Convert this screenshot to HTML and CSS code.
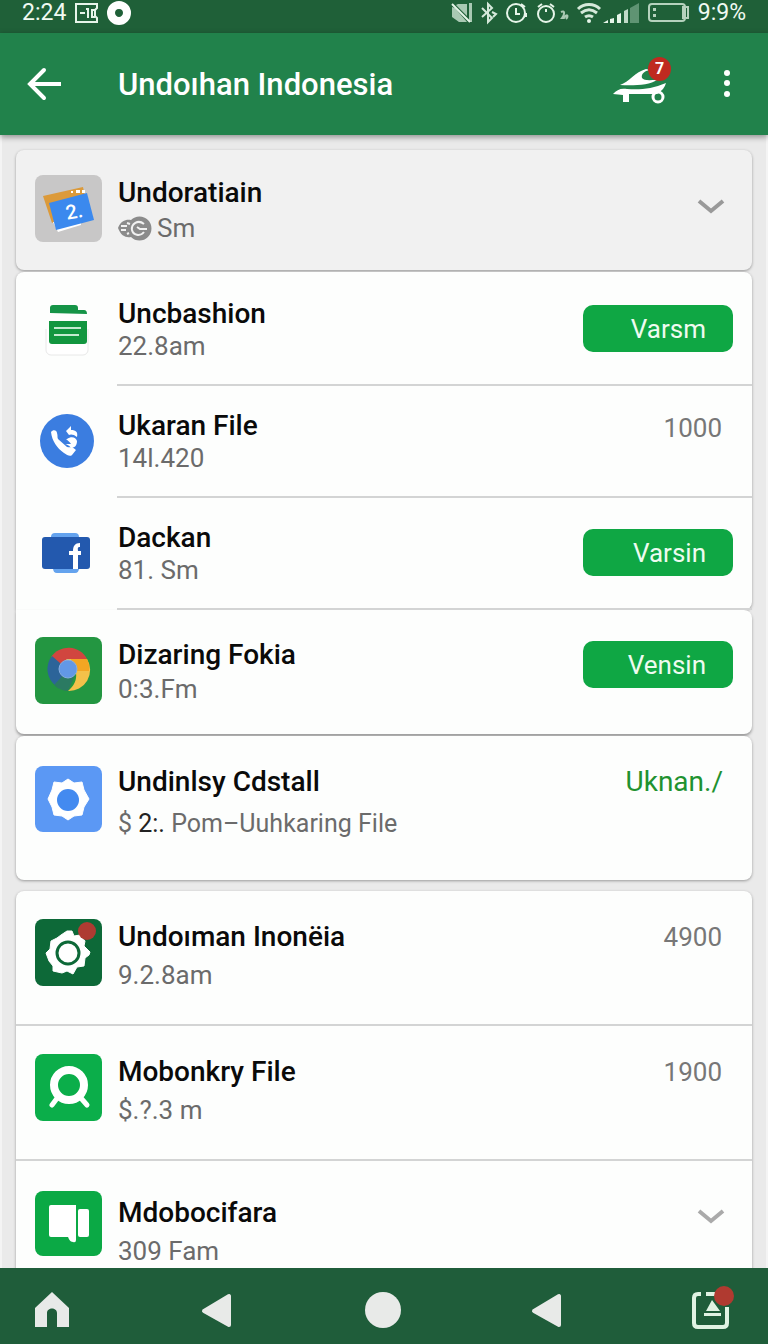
FILE: index.html
```html
<!DOCTYPE html>
<html lang="id">
<head>
    <meta charset="UTF-8">
    <meta name="viewport" content="width=device-width, initial-scale=1.0">
    <title>Undoıhan Indonesia</title>
    <link rel="stylesheet" href="styles.css">
</head>
<body>
    <div class="status-bar">
        <div class="status-group">
            <span class="clock">2:24</span>
            <svg width="23" height="20" viewBox="0 0 23 20" fill="none" stroke="#e6f5e9" stroke-width="2">
                <path d="M22 1H1v18h21v-4l-2-2V7l2-2z"/>
                <path d="M5 10h5M11 6h2v9M20 7h-3v7h3" />
            </svg>
            <svg width="24" height="24" viewBox="0 0 24 24">
                <path d="M12 0a12 12 0 1 0 0 24 12 12 0 0 0 0-24zm0 8c3 0 4 2 4 4s-2 4-4 4-4-2-4-4 1-4 4-4z" fill="#fff" fill-rule="evenodd"/>
            </svg>
        </div>
        <div class="status-group">
            <svg width="21" height="20" viewBox="0 0 21 20">
                <path d="M1 4l3 1 12 14H8l-7-5zM7 1h9v12L5 2zM18 0h3v19h-3z" fill="#a9c9b3"/>
                <path d="M1 1l18 18" stroke="#e6f5e9" stroke-width="2"/>
            </svg>
            <svg width="16" height="22" viewBox="0 0 16 22" fill="none" stroke="#d5e9da" stroke-width="2">
                <path d="M1 6l10 10-4 4V2l4 4L1 15M11 10l4 2-3 3"/>
            </svg>
            <svg width="22" height="20" viewBox="0 0 22 20" fill="none" stroke="#e6f5e9" stroke-width="2">
                <circle cx="10" cy="10" r="9"/>
                <path d="M10 5v6h4M15 1l4 3M20 10v4"/>
            </svg>
            <svg width="31" height="20" viewBox="0 0 31 20" fill="none" stroke="#e6f5e9" stroke-width="2">
                <circle cx="9" cy="11" r="8"/>
                <path d="M1 4l4-3M13 1l4 3M9 6v3"/>
                <path d="M24 9c4-2 4 2 1 6h2c3-5 5-2 2 1" stroke="#a9c9b3"/>
            </svg>
            <svg width="62" height="21" viewBox="0 0 62 21">
                <g fill="none" stroke="#d5e9da" stroke-width="3">
                    <path d="M1 6c6-6 16-6 22 0M4 10c5-4 11-4 16 0M8 14c3-2 5-2 8 0"/>
                </g>
                <circle cx="12" cy="18" r="2" fill="#e6f5e9"/>
                <path d="M26 20l5-3v3zM33 16l4-1v5h-4zM40 12l4-2v10h-4z" fill="#e6f5e9"/>
                <path d="M47 8l4-2v14h-4z" fill="#c0d9c7"/>
                <path d="M53 5l9-5v20h-9z" fill="#5f9473"/>
            </svg>
            <svg width="41" height="20" viewBox="0 0 41 20" fill="none" stroke="#b5d2bd" stroke-width="2">
                <rect x="1" y="1" width="36" height="17" rx="3"/>
                <path d="M35 3v13M38 4h2v11h-2"/>
                <path d="M5 5h3v3H5zM5 11h3v3H5z" fill="#b5d2bd" stroke="none"/>
            </svg>
            <span class="battery">9:9%</span>
        </div>
    </div>

    <header class="app-bar">
        <button class="icon-button" aria-label="Back">
            <svg width="36" height="34" viewBox="0 0 36 34" fill="none" stroke="#fff" stroke-width="4">
                <path d="M34 17H3"/>
                <path d="M17 3L3 17l14 14" stroke-linecap="round"/>
            </svg>
        </button>
        <h1>Undoıhan Indonesia</h1>
        <button class="icon-button car" aria-label="Notifications">
            <svg width="54" height="36" viewBox="0 0 54 36" fill="#fff">
                <path d="M7 17c9-3 15-13 26-16l4 1c-6 1-9 4-8 8 2 3 8 2 15 2-7 5-24 6-37 5z"/>
                <path d="M0 26c4-4 7-6 14-5 13 1 25 0 39-6-1 4-4 8-9 11H16v8h-6v-7z"/>
                <circle cx="45" cy="29" r="5" fill="none" stroke="#fff" stroke-width="3"/>
            </svg>
            <span class="badge">7</span>
        </button>
        <button class="icon-button" aria-label="More">
            <svg width="8" height="28" viewBox="0 0 8 28" fill="#fff">
                <circle cx="4" cy="3" r="3"/><circle cx="4" cy="13" r="3"/><circle cx="4" cy="24" r="3"/>
            </svg>
        </button>
    </header>

    <main class="content">
        <section class="card card-header">
            <div class="row row-header">
                <svg class="app-icon" viewBox="0 0 67 67">
                    <rect width="67" height="67" rx="8" fill="#c8c7c7"/>
                    <path d="M8 21l40-9 4 19-35 17z" fill="#dc9a3a"/>
                    <path d="M18 47l5 10 23-7v-6z" fill="#fff"/>
                    <path d="M14 28l38-10 7 27-38 10z" fill="#3b89ee"/>
                    <path d="M36 16h2v2h-2zM41 15h4v3h-4zM47 15h3v3h-3z" fill="#fff"/>
                    <text class="icon-digit" x="31" y="44" transform="rotate(-10 36 38)">2.</text>
                </svg>
                <div class="text">
                    <h2>Undoratiain</h2>
                    <p class="with-icon">
                        <svg width="33" height="25" viewBox="0 0 33 25">
                            <path d="M0 12C3 4 9 3 13 4a12 12 0 1 1 0 17C8 22 3 20 0 12z" fill="#8b8b8b"/>
                            <path d="M26 8c-6-5-13 0-12 6 1 5 8 7 12 2M19 11l3 2h7M3 10h6M3 14h5M9 7l3 1M9 18l2-1" fill="none" stroke="#f1f1f1" stroke-width="2"/>
                        </svg>
                        Sm
                    </p>
                </div>
                <button class="icon-button chevron" aria-label="Expand">
                    <svg width="28" height="16" viewBox="0 0 28 16" fill="none" stroke="#999" stroke-width="4">
                        <path d="M2 2l12 10L26 2"/>
                    </svg>
                </button>
            </div>
        </section>

        <section class="card card-list">
            <div class="row row-compact row-first">
                <svg class="app-icon" viewBox="0 0 67 67">
                    <rect x="11" y="8" width="42" height="51" rx="5" fill="#fff" stroke="#e8e8e8"/>
                    <path d="M10 7h44v26H10z" fill="#fdfefd"/>
                    <path d="M15 17v-5q0-3 3-3h22q3 0 3 3v2h6q3 0 3 4z" fill="#159447"/>
                    <path d="M14 25h38v20q0 3-3 3H17q-3 0-3-3z" fill="#12963f"/>
                    <path d="M19 32h27M19 39h25" stroke="#c5ead0" stroke-width="2"/>
                </svg>
                <div class="text">
                    <h2>Uncbashion</h2>
                    <p>22.8am</p>
                </div>
                <button class="action">Varsm</button>
            </div>
            <div class="row row-compact">
                <svg class="app-icon" viewBox="0 0 67 67">
                    <circle cx="32" cy="33" r="27" fill="#3b7de0"/>
                    <path d="M16 24c2-3 6-2 6 1 1 3 0 4 1 6l9 8c3 1 5-1 9 3l-4 5c-2 2-5 0-8-2-7-5-12-12-13-21z" fill="#fff"/>
                    <path d="M31 23l5-5v4c5 0 7 2 6 7-3-3-7-3-8-2zM32 31c4-3 9-2 10 2 0 5-3 7-6 7-2-3-5-4-6-4h6c-1-2-3-3-5-5z" fill="#fff"/>
                </svg>
                <div class="text">
                    <h2>Ukaran File</h2>
                    <p>14l.420</p>
                </div>
                <span class="count">1000</span>
            </div>
            <div class="row row-compact">
                <svg class="app-icon" viewBox="0 0 67 67">
                    <path d="M16 17q0-4 4-4h20q4 0 4 4v31q0 5-4 5H22q-4 0-4-5z" fill="#64a3ee"/>
                    <rect x="7" y="17" width="48" height="32" rx="3" fill="#2359ae"/>
                    <path d="M38 49V35h-4v-4h4c0-5 2-8 7-8v4c-3 0-2 2-2 4h3v4h-3v14z" fill="#fff"/>
                </svg>
                <div class="text">
                    <h2>Dackan</h2>
                    <p>81. Sm</p>
                </div>
                <button class="action">Varsin</button>
            </div>
        </section>

        <section class="card card-joined">
            <div class="row row-medium">
                <svg class="app-icon" viewBox="0 0 67 67">
                    <rect width="67" height="67" rx="8" fill="#239641"/>
                    <path d="M33 33L52 22A21 21 0 0 0 16 20z" fill="#d1463f"/>
                    <path d="M33 33L17 19A21 21 0 0 0 21 49z" fill="#2c6499"/>
                    <path d="M33 33L19 48a21 21 0 0 0 14 6l7-16z" fill="#2b7a62"/>
                    <path d="M31 22h21a21 21 0 0 1-19 32c6-5 9-11 8-18z" fill="#f3c14a"/>
                    <path d="M36 22h16q3 6 2 12H40z" fill="#f3a623"/>
                    <circle cx="33" cy="32" r="9" fill="#6298e6" stroke="#87aee0"/>
                </svg>
                <div class="text">
                    <h2>Dizaring Fokia</h2>
                    <p>0:3.Fm</p>
                </div>
                <button class="action">Vensin</button>
            </div>
        </section>

        <section class="card card-spaced">
            <div class="row row-detail">
                <svg class="app-icon" viewBox="0 0 67 67">
                    <rect width="67" height="66" rx="8" fill="#5b98f4"/>
                    <path d="M33 13l6 4 8-1 2 8 5 9-5 8-2 8-8 1-6 4-6-4-8-1-2-8-4-8 4-9 2-8 8 1z" fill="#fff" stroke="#fff" stroke-linejoin="round"/>
                    <circle cx="33" cy="34" r="11" fill="#438af0"/>
                </svg>
                <div class="text">
                    <h2>Undinlsy Cdstall</h2>
                    <p>$ <span class="dark">2:.</span> Pom–Uuhkaring File</p>
                </div>
                <a class="link" href="#">Uknan./</a>
            </div>
        </section>

        <section class="card">
            <div class="row row-large">
                <svg class="app-icon" viewBox="0 0 67 67">
                    <rect width="67" height="67" rx="8" fill="#0d6938"/>
                    <path d="M32 12h5l2 5 6-1 5 6-1 5 6 6-1 3-4 3-1 8-7 1-4 7-6-3-5 2-9-2v-5l-4-5-3-8 4-4 1-8 6-3 4-3z" fill="#fff" stroke="#fff" stroke-linejoin="round"/>
                    <circle cx="33" cy="34" r="11" fill="none" stroke="#0d6938" stroke-width="3"/>
                    <circle cx="52" cy="12" r="9" fill="#ae3b32"/>
                </svg>
                <div class="text">
                    <h2>Undoıman Inonëia</h2>
                    <p>9.2.8am</p>
                </div>
                <span class="count">4900</span>
            </div>
            <div class="row row-large">
                <svg class="app-icon" viewBox="0 0 67 67">
                    <rect width="67" height="67" rx="8" fill="#0bae4a"/>
                    <circle cx="34" cy="31" r="15" fill="none" stroke="#fff" stroke-width="8"/>
                    <path d="M23 43l-6 8M45 43l7 8" stroke="#fff" stroke-width="5" stroke-linecap="round"/>
                </svg>
                <div class="text">
                    <h2>Mobonkry File</h2>
                    <p>$.?.3 m</p>
                </div>
                <span class="count">1900</span>
            </div>
            <div class="row row-large row-last">
                <svg class="app-icon" viewBox="0 0 67 67">
                    <rect width="67" height="65" rx="8" fill="#0ba945"/>
                    <path d="M16 14h25v35q0 3-3 2c-3 0-4-3-5-5H16q-2 0-2-2V16q0-2 2-2z" fill="#fff"/>
                    <rect x="43" y="18" width="11" height="28" rx="2" fill="#fff"/>
                </svg>
                <div class="text">
                    <h2>Mdobocifara</h2>
                    <p>309 Fam</p>
                </div>
                <button class="icon-button chevron" aria-label="Expand">
                    <svg width="28" height="16" viewBox="0 0 28 16" fill="none" stroke="#aaa" stroke-width="4">
                        <path d="M2 2l12 10L26 2"/>
                    </svg>
                </button>
            </div>
        </section>
    </main>

    <nav class="nav-bar">
        <button class="icon-button" aria-label="Home">
            <svg width="42" height="42" viewBox="0 0 42 42" fill="#e8eae8">
                <path d="M21 3l17 16v19H26V24c0-6-10-6-10 0v14H4V19z"/>
            </svg>
        </button>
        <button class="icon-button" aria-label="Back">
            <svg width="42" height="42" viewBox="0 0 42 42" fill="#e8eae8" stroke="#e8eae8" stroke-width="4" stroke-linejoin="round">
                <path d="M33 7v29L8 22z"/>
            </svg>
        </button>
        <button class="icon-button" aria-label="Apps">
            <svg width="42" height="42" viewBox="0 0 42 42" fill="#e8eae8">
                <circle cx="22" cy="21" r="18"/>
            </svg>
        </button>
        <button class="icon-button" aria-label="Previous">
            <svg width="42" height="42" viewBox="0 0 42 42" fill="#e8eae8" stroke="#e8eae8" stroke-width="4" stroke-linejoin="round">
                <path d="M33 7v29L8 22z"/>
            </svg>
        </button>
        <button class="icon-button" aria-label="Recent">
            <svg width="42" height="42" viewBox="0 0 42 42">
                <path d="M10 5H7q-4 0-4 4v25q0 4 4 4h25q4 0 4-4V18M15 5h10" fill="none" stroke="#e0f3e3" stroke-width="4"/>
                <path d="M21 11l8 11H15zM13 24h17v3H13z" fill="#e0f3e3"/>
                <circle cx="33" cy="7" r="10" fill="#b03a30"/>
            </svg>
        </button>
    </nav>
</body>
</html>
```
FILE: styles.css
```css
* {
    margin: 0;
    padding: 0;
    box-sizing: border-box;
}

body {
    height: 100vh;
    display: flex;
    flex-direction: column;
    overflow: hidden;
    background: #eaeaea;
    font-family: Roboto, "Liberation Sans", sans-serif;
}

svg {
    display: block;
    flex: none;
    overflow: visible;
}

button {
    border: none;
    font-family: inherit;
    cursor: pointer;
}

.icon-button {
    position: relative;
    flex: none;
    background: none;
}

/* Top bars */
.status-bar {
    display: flex;
    justify-content: space-between;
    padding: 0 22px;
    height: 33px;
    flex: none;
    background: #1f6038;
    color: #f0faf2;
}

.status-group {
    display: flex;
    align-items: center;
    gap: 9px;
    height: 26px;
}

.clock,
.battery {
    font-size: 23px;
    line-height: 26px;
}

.app-bar {
    display: flex;
    align-items: center;
    flex: none;
    height: 102px;
    padding: 0 37px 0 27px;
    background: #21824b;
    box-shadow: 0 2px 6px rgba(0, 0, 0, 0.4);
    z-index: 1;
}

.app-bar h1 {
    flex: 1;
    margin-left: 55px;
    color: #fff;
    font-size: 31px;
    font-weight: 500;
}

.car {
    margin: 4px 56px 0 0;
}

.badge {
    position: absolute;
    top: -11px;
    right: -4px;
    width: 23px;
    height: 24px;
    border-radius: 50%;
    background: #bf2a20;
    color: #fff;
    font-size: 16px;
    font-weight: 700;
    line-height: 24px;
    text-align: center;
}

/* List */
.content {
    flex: 1;
    min-height: 0;
    padding: 15px 14px 0;
    overflow-y: auto;
    scrollbar-width: none;
    border: solid #f4f4f4;
    border-width: 0 2px;
}

.card {
    border-radius: 8px;
    background: #fdfefd;
    box-shadow: 0 1px 3px rgba(0, 0, 0, 0.35);
}

.card-header {
    margin-bottom: 2px;
    background: #f1f1f1;
}

.card-list {
    border-radius: 8px 8px 8px 0;
}

.card-joined {
    margin-bottom: 2px;
    border-radius: 0 8px 8px 8px;
    box-shadow: 0 2px 3px rgba(0, 0, 0, 0.35);
}

.card-spaced {
    margin-bottom: 11px;
}

.row {
    position: relative;
    display: flex;
    align-items: flex-start;
    padding: 25px 19px 0;
}

.app-icon {
    width: 67px;
    height: 67px;
    margin-right: 16px;
}

.icon-digit {
    fill: #fff;
    font-size: 20px;
    font-weight: 500;
}

.text {
    flex: 1;
    display: flex;
    flex-direction: column;
    padding-top: 2px;
}

.text h2 {
    color: #0a0a0a;
    font-size: 28px;
    font-weight: 500;
    line-height: 32px;
}

.text p {
    color: #6b6b6b;
    font-size: 26px;
    line-height: 32px;
}

.text .with-icon {
    display: flex;
    align-items: center;
    gap: 6px;
}

.dark {
    color: #222;
}

.row-header {
    min-height: 120px;
}

.row-header .text {
    gap: 3px;
}

.row-compact {
    min-height: 112px;
    padding-top: 22px;
}

.row-first {
    min-height: 114px;
    padding-top: 24px;
}

.row-compact::after {
    content: "";
    position: absolute;
    right: 0;
    bottom: 0;
    left: 101px;
    height: 2px;
    background: #d3d4d4;
}

.row-medium {
    min-height: 124px;
    padding-top: 27px;
}

.row-medium .text {
    gap: 2px;
}

.row-detail {
    min-height: 144px;
    padding-top: 30px;
}

.row-detail .text {
    gap: 10px;
    padding-top: 0;
}

.row-detail p {
    font-size: 25px;
}

.row-large {
    min-height: 135px;
    padding-top: 28px;
    border-bottom: 2px solid #d3d4d4;
}

.row-large .text {
    gap: 6px;
}

.row-last {
    padding-top: 30px;
    border-bottom: none;
}

.row-last .text {
    padding-top: 6px;
}

.action {
    width: 150px;
    height: 47px;
    margin-top: 9px;
    padding-right: 27px;
    border-radius: 10px;
    background: #0fa744;
    color: #eefbf0;
    font-size: 26px;
    text-align: right;
}

.row-medium .action {
    margin-top: 4px;
}

.count {
    padding: 2px 11px 0 0;
    color: #777;
    font-size: 26px;
    line-height: 32px;
}

.row-compact .count {
    padding-top: 4px;
}

.link {
    padding-right: 10px;
    color: #1f9230;
    font-size: 28px;
    line-height: 32px;
    text-decoration: none;
}

.chevron {
    margin: 24px 8px 0 0;
}

.row-last .chevron {
    margin-top: 18px;
}

/* Bottom navigation */
.nav-bar {
    display: flex;
    align-items: center;
    justify-content: space-between;
    flex: none;
    height: 76px;
    padding: 8px 35px 0 31px;
    background: #1f5d3a;
}
```
